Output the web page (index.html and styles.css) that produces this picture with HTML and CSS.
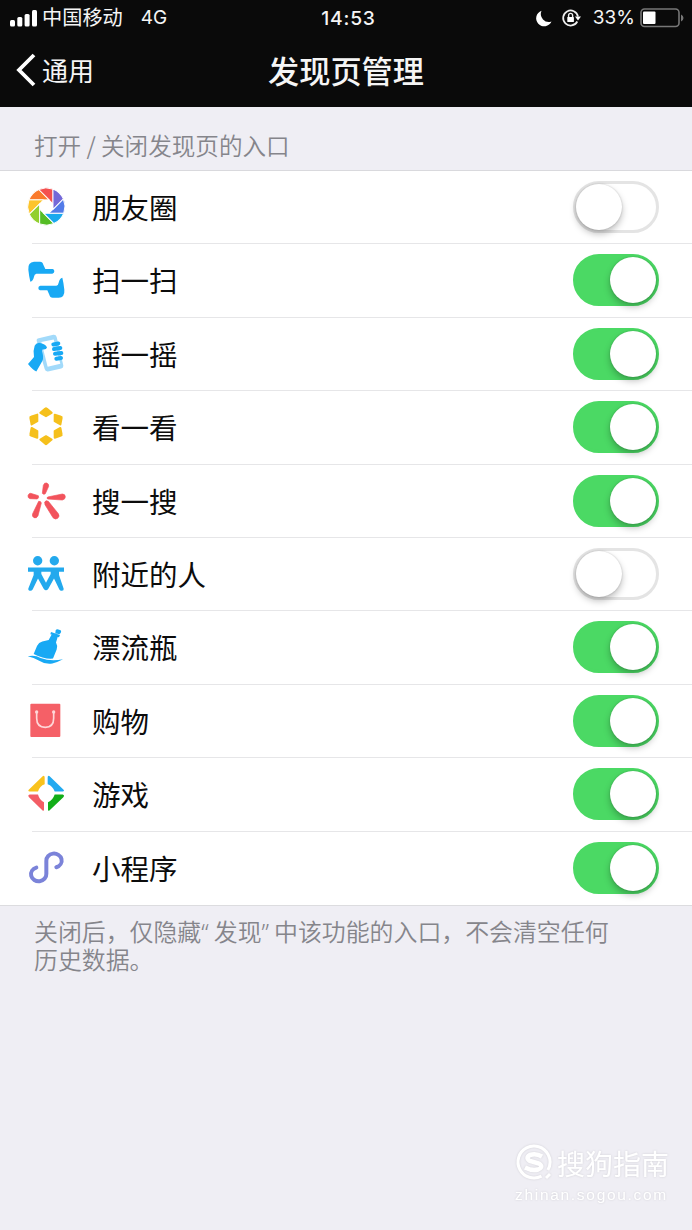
FILE: index.html
```html
<!DOCTYPE html>
<html lang="zh-CN">
<head>
<meta charset="utf-8">
<title>发现页管理</title>
<link rel="stylesheet" href="styles.css">
</head>
<body>
<div class="screen">
<header class="top">
  <div class="status">
    <div class="status-left">
      <svg class="signal" viewBox="0 0 27 18"><rect x="0" y="11" width="5" height="6.500" rx="1.500"/><rect x="7.300" y="8" width="5" height="9.500" rx="1.500"/><rect x="14.600" y="5" width="5" height="12.500" rx="1.500"/><rect x="22" y="1" width="5" height="16.500" rx="1.500"/></svg>
      <span class="carrier">中国移动</span><span class="net">4G</span>
    </div>
    <div class="time">14:53</div>
    <div class="status-right">
      <svg class="moon" viewBox="0 0 16 17"><path d="M5.500 .8A8 8 0 1 0 15.500 11.500A8 8 0 0 1 5.500 .8Z"/></svg>
      <svg class="lock" viewBox="0 0 19 18"><path d="M15.300 12.500A7.500 7.500 0 1 1 16 7.500" fill="none" stroke="#eee" stroke-width="1.700"/><path d="M13 7.500h6l-3 4z"/><rect x="5.300" y="8" width="6.600" height="5" rx=".6"/><path d="M6.600 8V6.400a2 2 0 0 1 4 0V8" fill="none" stroke="#eee" stroke-width="1.400"/></svg>
      <span class="percent">33%</span>
      <svg class="battery" viewBox="0 0 44 20"><rect x="1" y="1" width="38" height="17.500" rx="3.500" fill="none" stroke="#777" stroke-width="1.600"/><rect x="3" y="3.500" width="12.500" height="12.500" rx="1" fill="#fff"/><path d="M41 6.500q2.500 1 2.500 3.500t-2.500 3.500z" fill="#777"/></svg>
    </div>
  </div>
  <nav class="nav">
    <div class="back"><svg viewBox="0 0 20 34"><path d="M18 2L3 17L18 32" fill="none" stroke="#fff" stroke-width="3.800"/></svg><span>通用</span></div>
    <h1 class="title">发现页管理</h1>
  </nav>
</header>
<p class="hint">打开 / 关闭发现页的入口</p>
<ul class="list">
  <li class="row"><svg class="icon" viewBox="72 41.400 138 138"><g transform="translate(139 109)" stroke="#fff" stroke-width="3">
    <path fill="#f4504f" d="M20-8.300V-52.300A56 56 0 0 0-23-51Z"/>
    <path fill="#fa7a2c" transform="rotate(-45)" d="M20-8.300V-52.300A56 56 0 0 0-23-51Z"/>
    <path fill="#fcc42c" transform="rotate(-90)" d="M20-8.300V-52.300A56 56 0 0 0-23-51Z"/>
    <path fill="#92cf2f" transform="rotate(-135)" d="M20-8.300V-52.300A56 56 0 0 0-23-51Z"/>
    <path fill="#55bd25" transform="rotate(180)" d="M20-8.300V-52.300A56 56 0 0 0-23-51Z"/>
    <path fill="#19a9ee" transform="rotate(135)" d="M20-8.300V-52.300A56 56 0 0 0-23-51Z"/>
    <path fill="#527be8" transform="rotate(90)" d="M20-8.300V-52.300A56 56 0 0 0-23-51Z"/>
    <path fill="#7468d8" transform="rotate(45)" d="M20-8.300V-52.300A56 56 0 0 0-23-51Z"/><circle r="20" fill="#fff" stroke="none"/></g></svg>
    <span class="label">朋友圈</span><i class="switch"></i></li>
  <li class="row"><svg class="icon" viewBox="72 262 138 138" fill="#18a9f4"><path d="M91 336Q87 320 85 300Q83 277 102 276H120Q128 276 130 285L136 298H158Q163 299 163 305Q163 311 157 312H109Q103 313 102 321Q99 334 91 336Z"/><path transform="rotate(180 139 330)" d="M91 336Q87 320 85 300Q83 277 102 276H120Q128 276 130 285L136 298H158Q163 299 163 305Q163 311 157 312H109Q103 313 102 321Q99 334 91 336Z"/></svg>
    <span class="label">扫一扫</span><i class="switch on"></i></li>
  <li class="row"><svg class="icon" viewBox="72 32.700 138 138" fill="#18a9f4"><path fill="#a2dafa" d="M113 55L160 44Q168 43 170 51L190 136Q191 143 184 145L144 154Q136 155 134 147L110 62Q109 57 113 55Z"/><path fill="#fff" d="M124 66L161 58L181 131L143 140Z"/><path d="M84 132L102 111Q98 94 104 77Q107 69 117 68Q137 71 141 82Q139 90 127 88Q124 91 128 101Q132 116 124 128L109 154Q99 151 84 132Z"/><g fill="none" stroke="#18a9f4" stroke-width="12" stroke-linecap="round"><path d="M160 73L175 70M162 87L181 84M165 101L184 99M169 116L183 114"/></g></svg>
    <span class="label">摇一摇</span><i class="switch on"></i></li>
  <li class="row"><svg class="icon" viewBox="72 253.400 138 138"><g transform="translate(138 320)" fill="#f5c01c" stroke="#f5c01c" stroke-width="6" stroke-linejoin="round"><path id="gem" d="M-17-40L-2-53Q0-55 2-53L17-40L0-30Z"/><use href="#gem" transform="rotate(60)"/><use href="#gem" transform="rotate(120)"/><use href="#gem" transform="rotate(180)"/><use href="#gem" transform="rotate(240)"/><use href="#gem" transform="rotate(300)"/></g></svg>
    <span class="label">看一看</span><i class="switch on"></i></li>
  <li class="row"><svg class="icon" viewBox="72 39 138 138" fill="#f2535c" stroke="#f2535c" stroke-width="2"><path d="M130 61Q133 52 140 54Q147 56 146 64L136 86Q131 90 127 85ZM92 85L115 92Q118 99 112 102L90 101Q83 99 84 92Q86 85 92 85ZM143 96L187 87Q196 87 196 96Q195 104 187 105L143 102Q139 99 143 96ZM116 109Q123 108 124 114L114 152Q110 161 102 158Q95 154 98 146ZM134 111Q138 104 145 109L175 146Q180 154 173 160Q166 165 159 158L135 119Z"/></svg>
    <span class="label">搜一搜</span><i class="switch on"></i></li>
  <li class="row"><svg class="icon" viewBox="72 259.700 138 138"><g fill="#23a9ed"><circle cx="113" cy="289" r="14"/><circle cx="163" cy="289" r="14"/><path d="M84 309H192V322H177V332L191 373Q192 380 184 379Q180 379 178 375L162 342L145 373Q138 382 131 373L114 342L98 375Q94 381 87 378Q84 376 85 372L101 332V322H84Z"/></g><path d="M124 322H152V329L138 355L124 329Z" fill="#fff"/></svg>
    <span class="label">附近的人</span><i class="switch"></i></li>
  <li class="row"><svg class="icon" viewBox="72 45.300 138 138" fill="#18a9f4"><path d="M167 64Q170 60 175 62L182 64Q185 67 182 72L178 76L166 73ZM153 69L180 78L177 85L173 84L168 101Q174 111 170 122L159 149Q134 152 101 135L111 111Q116 101 127 98L146 93L155 77L151 76Z"/><path d="M83 142Q104 137 122 147Q152 159 189 151Q170 161 157 164Q134 167 116 155Q102 146 83 142Z"/></svg>
    <span class="label">漂流瓶</span><i class="switch on"></i></li>
  <li class="row"><svg class="icon" viewBox="72 266 138 138"><rect x="91" y="283" width="90" height="100" rx="3" fill="#f56067"/><path d="M110 308V327Q110 354 136 354Q161 354 161 327V308" fill="none" stroke="#fed7d8" stroke-width="5"/><circle cx="110" cy="308" r="5" fill="#fed7d8"/><circle cx="161" cy="308" r="5" fill="#fed7d8"/></svg>
    <span class="label">购物</span><i class="switch on"></i></li>
  <li class="row"><svg class="icon" viewBox="72 42.600 138 138"><path fill="#f9c21c" d="M128 58Q134 55 134 62V82Q119 87 114 104H89Q82 103 87 98Z"/><path fill="#22aaf0" d="M149 58Q143 55 143 62V82Q158 87 164 104H188Q195 103 190 98Z"/><path fill="#f35d65" d="M89 113H114Q119 131 132 136V158Q132 164 127 160L87 121Q82 115 89 113Z"/><path fill="#12ad18" d="M188 113H164Q158 131 144 136V158Q144 164 149 160L190 121Q195 115 188 113Z"/></svg>
    <span class="label">游戏</span><i class="switch on"></i></li>
  <li class="row"><svg class="icon" viewBox="72 263.300 138 138"><path d="M109 331A23 21 0 1 0 139 350V311A23 21 0 1 1 169 330" fill="none" stroke="#7b83d9" stroke-width="12" stroke-linecap="round"/></svg>
    <span class="label">小程序</span><i class="switch on"></i></li>
</ul>
<p class="note">关闭后，仅隐藏<span class="quote">“</span>发现<span class="quote">”</span>中该功能的入口，不会清空任何<br>历史数据。</p>
<footer class="mark">
  <div class="brand"><svg viewBox="0 0 38 38"><circle cx="18" cy="18" r="16" fill="none" stroke="#fff" stroke-width="3" stroke-dasharray="91 9.500" transform="rotate(62 18 18)"/><path d="M26 12.500Q20 9 14 11Q9 14 14 17L23 19.500Q28 23 22 25.500Q16 27 9 23.500" fill="none" stroke="#fff" stroke-width="4.500"/><path d="M30 34L34 30" stroke="#fff" stroke-width="3"/></svg><span>搜狗指南</span></div>
  <div class="url">zhinan.sogou.com</div>
</footer>
</div>
</body>
</html>
```
FILE: styles.css
```css
* { box-sizing: border-box; }
body {
  margin: 0;
  background: #efeef4;
  font-family: "Noto Sans CJK SC", sans-serif;
  color: #0c0c0c;
}
svg { display: block; flex: none; overflow: visible; }
.screen {
  width: 692px;
  height: 1230px;
  display: flex;
  flex-direction: column;
  overflow: hidden;
}
.top { height: 107px; background: #0a0a0a; color: #f5f5f5; flex: none; }
.status {
  height: 36px;
  padding: 0 8px 0 10px;
  display: grid;
  grid-template-columns: 1fr auto 1fr;
  align-items: center;
  font-family: Inter, "Noto Sans CJK SC", sans-serif;
  line-height: 36px;
}
.status-left, .status-right { display: flex; align-items: center; }
.status-right { justify-content: flex-end; fill: #fff; }
.signal { width: 27px; height: 18px; fill: #fff; }
.carrier { font-size: 20.200px; margin-left: 5px; }
.net { font-size: 19px; margin-left: 18px; }
.time { font-size: 19.300px; font-weight: 500; letter-spacing: .8px; padding-left: 3px; }
.moon { width: 16px; height: 17px; margin-right: 10px; }
.lock { width: 19px; height: 18px; margin-right: 12px; }
.percent { font-size: 19px; margin-right: 5px; }
.battery { width: 44px; height: 20px; }
.nav {
  height: 68px;
  padding: 0 16px;
  display: grid;
  grid-template-columns: 1fr auto 1fr;
  align-items: center;
}
.back { display: flex; align-items: center; gap: 6px; font-size: 26px; line-height: 68px; }
.back svg { width: 20px; height: 34px; }
.title { margin: 0; font-size: 31.200px; font-weight: 500; line-height: 66px; }
.hint {
  margin: 0;
  height: 63px;
  padding: 15px 34px 0;
  font-size: 23.600px;
  line-height: 46px;
  font-weight: 350;
  color: #85858b;
  flex: none;
}
.list {
  list-style: none;
  margin: 0;
  padding: 0;
  height: 736px;
  background: #fff;
  border-top: 1px solid #d9d9dd;
  border-bottom: 1px solid #dcdcdf;
  display: grid;
  grid-template-rows: repeat(10, 1fr);
  flex: none;
}
.row {
  display: flex;
  align-items: center;
  padding: 0 33px 1.500px 24px;
  background: linear-gradient(#e6e6e8, #e6e6e8) 32px 100% / 100% 1px no-repeat;
}
.row:last-child { background: none; }
.icon { width: 46px; height: 46px; }
.label { flex: 1; margin-left: 22px; font-size: 28.500px; line-height: 40px; }
.switch {
  width: 86px;
  height: 52px;
  border-radius: 26px;
  border: 3px solid #e4e4e4;
  background: #fff;
  display: flex;
  align-items: center;
}
.switch::before {
  content: "";
  width: 46px;
  height: 46px;
  border-radius: 50%;
  background: #fff;
  box-shadow: 0 4px 7px rgba(0, 0, 0, .25), 0 0 2px rgba(0, 0, 0, .2);
}
.switch.on { background: #4bd964; border-color: #4bd964; justify-content: flex-end; }
.note {
  margin: 0;
  padding: 11px 34px 0;
  font-size: 23.900px;
  line-height: 28px;
  font-weight: 350;
  color: #85858b;
  white-space: nowrap;
}
.quote { display: inline-block; width: 12.500px; font-family: "Noto Sans", sans-serif; line-height: 20px; }
.mark {
  margin: auto 23px 22px auto;
  color: #fff;
  filter: drop-shadow(0 0 1px rgba(0, 0, 0, .12));
}
.brand { display: flex; align-items: center; gap: 3px; font-size: 28px; line-height: 38px; margin-left: 5px; }
.brand svg { width: 38px; height: 38px; }
.url { font: 15.500px/26px "Liberation Sans", sans-serif; letter-spacing: 1.700px; margin-left: 4px; }
```
